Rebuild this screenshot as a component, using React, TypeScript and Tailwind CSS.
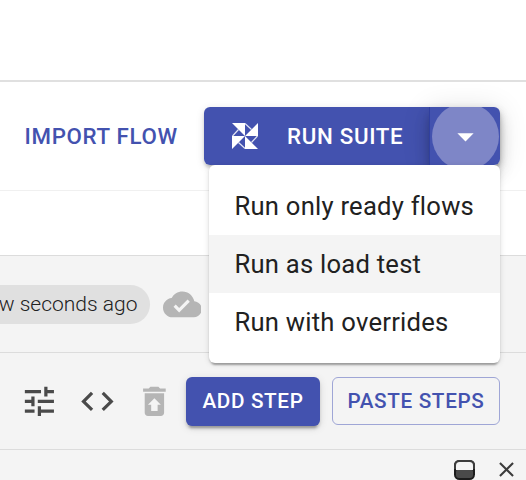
import type { ReactNode } from "react";

function Icon({ d, className }: { d: string; className: string }) {
  return (
    <svg viewBox="0 0 24 24" fill="currentColor" className={`block shrink-0 ${className}`}>
      <path d={d} />
    </svg>
  );
}

const icons = {
  dropDown: "M7 10l5 5 5-5z",
  cloudDone:
    "M19.35 10.04C18.67 6.59 15.64 4 12 4 9.11 4 6.6 5.64 5.35 8.04 2.34 8.36 0 10.91 0 14c0 3.31 2.69 6 6 6h13c2.76 0 5-2.24 5-5 0-2.64-2.05-4.78-4.65-4.96zM10 17l-3.5-3.5 1.41-1.41L10 14.17 15.18 9l1.41 1.41L10 17z",
  tune: "M3 17v2h6v-2H3zM3 5v2h10V5H3zm10 16v-2h8v-2h-8v-2h-2v6h2zM7 9v2H3v2h4v2h2V9H7zm14 4v-2H11v2h10zm-6-4h2V7h4V5h-4V3h-2v6z",
  code: "M9.4 16.6L4.8 12l4.6-4.6L8 6l-6 6 6 6 1.4-1.4zm5.2 0l4.6-4.6-4.6-4.6L16 6l6 6-6 6-1.4-1.4z",
  restore:
    "M19 4h-3.5l-1-1h-5l-1 1H5v2h14V4zM6 7v12c0 1.1.9 2 2 2h8c1.1 0 2-.9 2-2V7H6zm8 7v4h-4v-4H8l4-4 4 4h-2z",
  close:
    "M19 6.41L17.59 5 12 10.59 6.41 5 5 6.41 10.59 12 5 17.59 6.41 19 12 13.41 17.59 19 19 17.59 13.41 12z",
};

function Pinwheel() {
  return (
    <svg viewBox="0 0 26 26" className="block size-[26px] shrink-0">
      <path d="M0 0H13V13ZM26 0V13H13ZM26 26H13V13ZM0 26V13H13Z" fill="white" />
      <path
        d="M13 .5L19.5 6.5M25.5 13L19.5 19.5M13 25.5L6.5 19.5M.5 13L6.5 6.5"
        fill="none"
        stroke="white"
        strokeWidth="1.2"
        strokeOpacity=".85"
      />
    </svg>
  );
}

function MenuItem({ children, active }: { children: ReactNode; active?: boolean }) {
  return (
    <div
      className={`flex h-[58px] items-center pl-[25.5px] text-[25.6px] tracking-[0.24px] whitespace-nowrap text-[#212121] ${active ? "bg-[#f4f4f4]" : ""}`}
    >
      {children}
    </div>
  );
}

export default function App() {
  return (
    <div className="relative h-[480px] w-[526px] overflow-hidden bg-white font-['Roboto',sans-serif]">
      <div className="h-[82px] border-b-2 border-[#e0e0e0]" />

      <header className="flex h-[109px] items-center border-b border-[#f0f0f0] pl-[24.5px]">
        <span className="w-[179.5px] pt-[2px] text-[22.3px] font-medium tracking-[0.68px] whitespace-nowrap text-[#4352af]">
          IMPORT FLOW
        </span>
        <div className="relative flex h-[58px] w-[296px] rounded-[6px] shadow-[0_3px_2px_-3px_rgba(0,0,0,.2),0_3px_3px_rgba(0,0,0,.14),0_2px_8px_rgba(0,0,0,.12)]">
          <button className="flex w-[225px] items-center rounded-l-[6px] bg-[#4352af] pl-[28px] text-[22.3px] font-medium tracking-[0.68px] whitespace-nowrap text-white">
            <Pinwheel />
            <span className="ml-[29px] pt-[2px]">RUN SUITE</span>
          </button>
          <button className="w-[71px] rounded-r-[6px] shadow-[0_5px_8px_-2px_rgba(0,0,0,.2),0_10px_16px_rgba(0,0,0,.14),0_2px_29px_rgba(0,0,0,.12)]">
            <span className="flex h-full items-center justify-center overflow-hidden rounded-r-[6px] border-l border-[#303f9f] bg-[#4352af]">
              <span className="flex size-[67px] shrink-0 items-center justify-center rounded-full bg-[#7e86c7] text-white">
                <Icon d={icons.dropDown} className="size-[39px]" />
              </span>
            </span>
          </button>
        </div>
      </header>

      <div className="h-[64px]" />

      <section className="flex h-[98px] items-center border-y border-[#dcdcdc] bg-[#f4f4f4]">
        <div className="flex h-[39px] w-[150px] items-center justify-end rounded-r-full bg-[#e0e0e0] pt-[2px] pr-[12.5px] text-[21px] font-light whitespace-nowrap text-[#212121]">
          w seconds ago
        </div>
        <Icon d={icons.cloudDone} className="ml-[12.5px] size-[38.8px] text-[#b5b5b5]" />
      </section>

      <section className="flex h-[97px] items-center border-b border-[#dcdcdc] bg-[#f4f4f4] pl-[19.6px] text-[#4a4a4a]">
        <Icon d={icons.tune} className="size-[38.8px]" />
        <Icon d={icons.code} className="ml-[19.5px] size-[38.8px]" />
        <Icon d={icons.restore} className="ml-[18.2px] size-[38.8px] text-[#b5b5b5]" />
        <button className="ml-[12.3px] h-[49px] w-[134px] shrink-0 rounded-[6px] bg-[#4352af] text-[20.7px] font-medium tracking-[0.66px] whitespace-nowrap text-white shadow-[0_5px_2px_-3px_rgba(0,0,0,.2),0_3px_3px_rgba(0,0,0,.14),0_2px_8px_rgba(0,0,0,.12)]">
          <span className="block pt-[1px]">ADD STEP</span>
        </button>
        <button className="ml-[12px] h-[48px] w-[168px] shrink-0 rounded-[6px] border border-[#9fa6d6] text-[20.7px] font-medium tracking-[0.66px] whitespace-nowrap text-[#4352af]">
          <span className="block pt-[2px]">PASTE STEPS</span>
        </button>
      </section>

      <footer className="flex h-[30px] items-center justify-end gap-[19px] bg-[#f4f4f4] pt-[9px] pr-[7px] text-[#3c3c3c]">
        <svg viewBox="0 0 21 20" className="mt-[1px] block h-[20px] w-[21px]">
          <rect width="21" height="20" rx="5.5" fill="#1c1c1c" />
          <path d="M0 9V5.5Q0 0 5.5 0H15.500Q21 0 21 5.500V9Z" fill="#3c3c3c" />
          <rect x="2" y="9" width="17" height="9" rx="3" fill="#4a4a4a" />
          <path d="M2 10V5.500Q2 2 5.500 2H15.500Q19 2 19 5.500V10Z" fill="#f4f4f4" />
        </svg>
        <Icon d={icons.close} className="size-[25px]" />
      </footer>

      <div className="absolute top-[165px] left-[209px] w-[291px] rounded-[6px] bg-white py-[12px] shadow-[0_5px_2px_-3px_rgba(0,0,0,.2),0_2px_2px_rgba(0,0,0,.14),0_1px_6px_rgba(0,0,0,.12)]">
        <MenuItem>Run only ready flows</MenuItem>
        <MenuItem active>Run as load test</MenuItem>
        <MenuItem>Run with overrides</MenuItem>
      </div>
    </div>
  );
}
